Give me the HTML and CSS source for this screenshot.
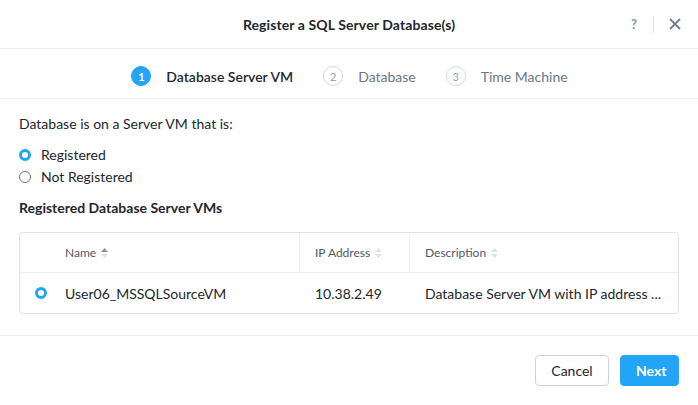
FILE: index.html
```html
<!DOCTYPE html>
<html>
<head>
<meta charset="utf-8">
<link rel="stylesheet" href="styles.css">
</head>
<body>
<div class="modal">
  <header class="header">
    <div class="title">Register a SQL Server Database(s)</div>
    <div class="header-actions">
      <span class="help">?</span>
      <span class="sep"></span>
      <svg class="close" width="12" height="12" viewBox="0 0 12 12"><path d="M1 1L11 11M11 1L1 11" stroke="#6f7d8c" stroke-width="1.8" fill="none"/></svg>
    </div>
  </header>
  <nav class="steps">
    <div class="step active"><span class="num">1</span><span class="label">Database Server VM</span></div>
    <div class="step"><span class="num">2</span><span class="label">Database</span></div>
    <div class="step"><span class="num">3</span><span class="label">Time Machine</span></div>
  </nav>
  <main class="body">
    <p class="question">Database is on a Server VM that is:</p>
    <div class="radios">
      <label class="radio"><span class="dot on"></span>Registered</label>
      <label class="radio"><span class="dot"></span>Not Registered</label>
    </div>
    <h3 class="section">Registered Database Server VMs</h3>
    <div class="table">
      <div class="row head">
        <div class="cell sel"></div>
        <div class="cell name">Name <svg class="sort" width="7" height="10" viewBox="0 0 7 10"><path d="M3.5 0L7 4H0z" fill="#8a96a3"/><path d="M3.5 10L7 6H0z" fill="#dde2e7"/></svg></div>
        <div class="cell ip">IP Address <svg class="sort" width="7" height="10" viewBox="0 0 7 10"><path d="M3.5 0L7 4H0z" fill="#dde2e7"/><path d="M3.5 10L7 6H0z" fill="#dde2e7"/></svg></div>
        <div class="cell desc">Description <svg class="sort" width="7" height="10" viewBox="0 0 7 10"><path d="M3.5 0L7 4H0z" fill="#dde2e7"/><path d="M3.5 10L7 6H0z" fill="#dde2e7"/></svg></div>
      </div>
      <div class="row">
        <div class="cell sel"><span class="dot on"></span></div>
        <div class="cell name">User06_MSSQLSourceVM</div>
        <div class="cell ip">10.38.2.49</div>
        <div class="cell desc">Database Server VM with IP address ...</div>
      </div>
    </div>
  </main>
  <footer class="footer">
    <button class="btn cancel">Cancel</button>
    <button class="btn next">Next</button>
  </footer>
</div>
</body>
</html>
```
FILE: styles.css
```css
* { box-sizing: border-box; }
html, body { margin: 0; padding: 0; background: #fff; }
body {
  font-family: "Lato", "Open Sans", sans-serif;
  color: #22272e;
  width: 698px;
  height: 405px;
  overflow: hidden;
}
.modal { display: flex; flex-direction: column; height: 405px; }
.header {
  height: 49px;
  flex: none;
  border-bottom: 1px solid #eceef1;
  display: flex;
  align-items: center;
  justify-content: center;
  position: relative;
}
.title { font-size: 14px; font-weight: 700; color: #22272e; letter-spacing: 0.1px; }
.header-actions {
  position: absolute;
  right: 17px;
  top: 0;
  height: 48px;
  display: flex;
  align-items: center;
}
.help { font-size: 13px; color: #8a96a3; font-weight: 700; margin-right: 16px; }
.sep { width: 1px; height: 17px; background: #dfe3e7; margin-right: 15px; }
.close { display: block; }
.steps {
  height: 50px;
  flex: none;
  border-bottom: 1px solid #eceef1;
  display: flex;
  align-items: center;
  justify-content: center;
  gap: 30px;
  padding-left: 1px;
  padding-top: 5px;
}
.step { display: flex; align-items: center; font-size: 14px; color: #6b7785; }
.step .num {
  width: 20px; height: 20px; border-radius: 50%;
  border: 1px solid #d5dae0;
  color: #9aa5b1;
  font-size: 11px;
  display: flex; align-items: center; justify-content: center;
  margin-right: 15px;
}
.step.active .num { background: #22a5f7; border-color: #22a5f7; color: #fff; font-weight: 700; }
.step.active .label { color: #22272e; font-weight: 600; }
.body { padding: 16px 19px 0 19px; flex: 1; border-bottom: 1px solid #eceef1; }
.question { margin: 0; font-size: 14px; line-height: 18px; }
.radios { margin-top: 13px; display: flex; flex-direction: column; gap: 4px; }
.radio { display: flex; align-items: center; font-size: 14px; line-height: 18px; }
.dot {
  width: 12px; height: 12px; border-radius: 50%;
  border: 1px solid #6b7785;
  margin-right: 10px;
  display: inline-block;
  flex: none;
}
.dot.on { border: 3.5px solid #22a5f7; background: #fff; }
.section { margin: 13px 0 0 0; font-size: 14px; font-weight: 700; line-height: 18px; }
.table {
  margin-top: 15px;
  border: 1px solid #dfe3e7;
  border-radius: 4px;
}
.row { display: flex; height: 40px; align-items: stretch; }
.row.head { border-bottom: 1px solid #eceef1; font-size: 12px; color: #4d5966; }
.row:not(.head) { font-size: 14px; }
.cell { display: flex; align-items: center; }
.cell.sel { width: 45px; padding-left: 15px; }
.cell.sel .dot { margin-right: 0; }
.cell.name { width: 234px; }
.cell.ip { width: 110px; padding-left: 15px; }
.cell.desc { flex: 1; padding-left: 15px; }
.row.head .cell.ip, .row.head .cell.desc { border-left: 1px solid #eceef1; }
.row:not(.head) .cell.ip { border-left: 1px solid transparent; }
.row:not(.head) .cell.desc { border-left: 1px solid transparent; }
.sort { margin-left: 5px; }
.footer {
  height: 69px;
  flex: none;
  display: flex;
  justify-content: flex-end;
  align-items: center;
  gap: 11px;
  padding-right: 19px;
}
.btn {
  height: 31px;
  border-radius: 4px;
  font-family: inherit;
  font-size: 14px;
  padding: 0 15px;
}
.cancel { background: #fff; border: 1px solid #cdd3da; color: #22272e; width: 74px; }
.next { background: #22a5f7; border: 1px solid #22a5f7; color: #fff; font-weight: 700; width: 59px; }
```
